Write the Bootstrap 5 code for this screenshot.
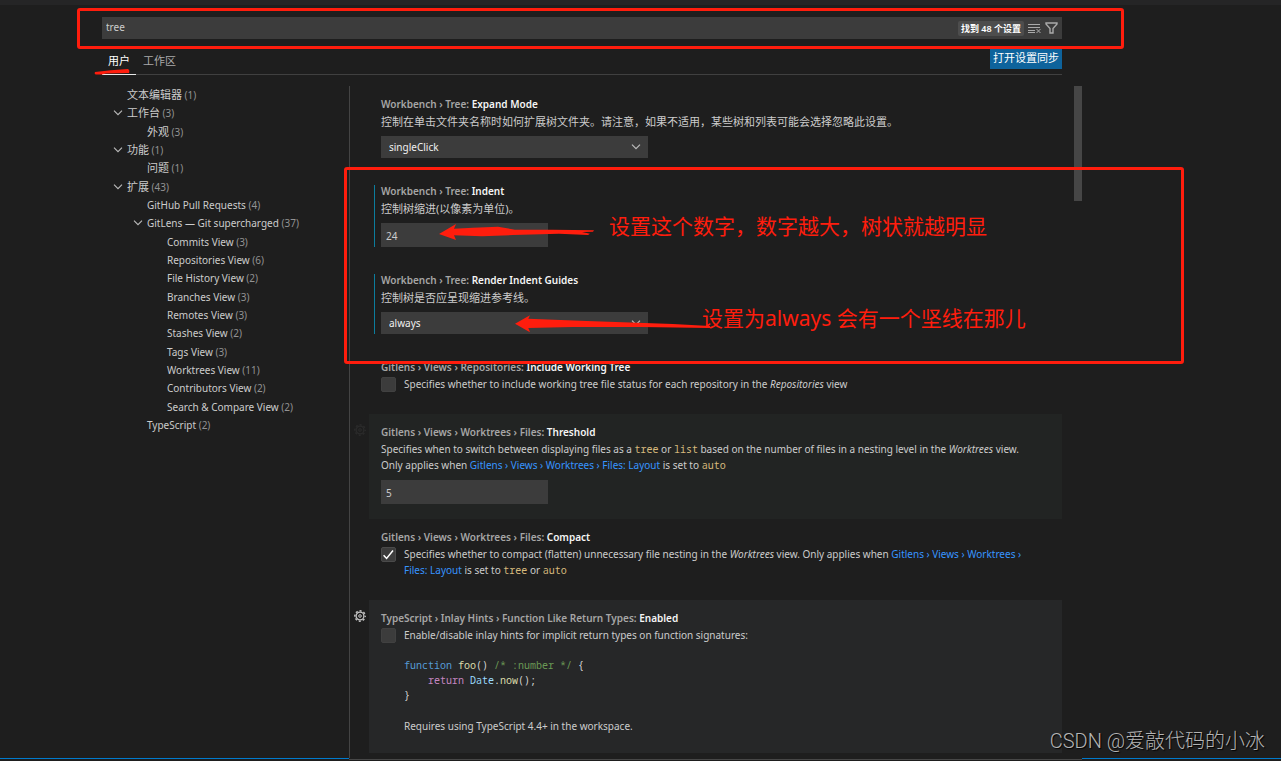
<!DOCTYPE html>
<html lang="zh-CN">
<head>
<meta charset="utf-8">
<meta name="viewport" content="width=device-width, initial-scale=1">
<title>设置</title>
<link href="https://cdn.jsdelivr.net/npm/bootstrap@5.3.0/dist/css/bootstrap.min.css" rel="stylesheet">
<style>
  :root { --ui: "Noto Sans", "Noto Sans CJK SC", sans-serif; --red: #ff1d0d; }
  body { background: #1e1e1e; color: #ccc; font: 10px/16px var(--ui); overflow: hidden; }
  .page { min-height: 100vh; }
  .top-strip { height: 5px; background: #252526; }
  .editor { padding: 12px 219px 0 102px; }
  .search { height: 22px; background: #3c3c3c; padding-right: 4px; }
  .search input { background: none; border: 0; color: #ccc; padding: 0 4px 2px; outline: 0; min-width: 0; }
  .count { background: #4d4d4d; color: #fff; border-radius: 2px; height: 15px; padding: 0 3px; font-size: 9px; line-height: 16px; font-weight: 600; font-family: "Noto Sans", "Noto Sans CJK SC", sans-serif; }
  .icon-btn { background: none; border: 0; padding: 0; line-height: 0; color: #aaa; }
  .tabs { height: 27px; margin-top: 9px; border-bottom: 1px solid #404040; }
  .tabs .nav-link { color: #aaa; font-size: 11px; line-height: 18px; padding: 4px 6px 4px; margin-bottom: -1px; border-bottom: 1px solid transparent; border-radius: 0; }
  .tabs .nav-link.active { color: #fff; border-bottom-color: #e7e7e7; }
  .tabs .nav-link + .nav-link { padding-left: 7px; }
  .sync { background: #0e639c; color: #fff; border: 0; height: 20px; padding: 0 3px 2px; font-size: 11px; line-height: 18px; margin-top: 1px; }
  .toc { width: 247px; padding-top: 11px; }
  .toc ul { height: 348px; }
  .toc li { padding-left: 25px; }
  .toc .lv2 { padding-left: 45px; }
  .toc .lv3 { padding-left: 65px; }
  .toc a { color: #ccc; text-decoration: none; }
  .toc small { color: #929292; font-size: 10px; }
  .toc svg { width: 10px; height: 6px; margin-left: -14px; margin-right: 4px; vertical-align: 1px; }
  .zh { font-size: 11px; }
  .settings { margin-top: 11px; border-left: 1px solid #444; padding-left: 19px; }
  .setting { padding: 10px 12px 15px; position: relative; }
  .setting h2 { font: 600 10px/16px var(--ui); color: #a6a6a6; margin: 0 0 1px; }
  .setting h2 b { color: #f5f5f5; font-weight: 600; }
  .setting p { margin: 0 0 7px; }
  .setting p.zh { line-height: 17px; margin-bottom: 6px; }
  .setting a { color: #3794ff; text-decoration: none; }
  .setting code { color: #d7ba7d; font: 10px/15px "Noto Sans Mono", monospace; }
  .setting pre { color: #d4d4d4; font: 10px/15px "Noto Sans Mono", monospace; margin: 15px 0; overflow: visible; }
  .kw { color: #569cd6; } .fn { color: #dcdcaa; } .cm { color: #6a9955; } .ret { color: #c586c0; } .obj { color: #9cdcfe; }
  .form-select { width: 267px; height: 22px; background-color: #3c3c3c; color: #f0f0f0; border: 0; border-radius: 0; font-size: 10px; line-height: 15px; padding: 4px 8px 3px; background-size: 10px 6px; background-position: right 7px center; background-image: url("data:image/svg+xml,%3Csvg xmlns='http://www.w3.org/2000/svg' viewBox='0 0 10 6'%3E%3Cpath d='M1 .7l4 4 4-4' fill='none' stroke='%23bbb' stroke-width='1.2'/%3E%3C/svg%3E"); }
  .num { width: 167px; height: 24px; background: #3c3c3c; color: #ccc; border: 0; border-radius: 0; padding: 1px 5px 0; font-size: 10px; }
  .edited::before { content: ""; position: absolute; left: 5px; top: 12px; bottom: 15px; width: 1px; background: #0c7d9d; }
  .form-check-input { width: 15px; height: 15px; margin: 1px 8px 0 0; background-color: #3c3c3c; border: 1px solid #414141; border-radius: 2px !important; flex: none; }
  .form-check-input:checked { background-color: #3c3c3c; border-color: #4a4a4a; background-size: 15px 15px; background-image: url("data:image/svg+xml,%3Csvg xmlns='http://www.w3.org/2000/svg' viewBox='0 0 15 15'%3E%3Cpath d='M2.6 8.2l3 3.2L12 3.6' fill='none' stroke='%23fff' stroke-width='1.5'/%3E%3C/svg%3E"); }
  .hovered { background: #222423; }
  .focused { background: #262728; }
  .gear { position: absolute; left: -15px; top: 10px; }
  .gear.dim { color: #2b2b2b; }
  .gear.lit { color: #c5c5c5; }
  .thumb { position: absolute; right: 199px; top: 86px; width: 8px; height: 115px; background: #464646; }
  .status { height: 3px; }
  .status .blue { border-top: 1px solid #007acc; }
  .status .grey { border-top: 1px solid #474747; margin-top: 1px; }
  .notes { position: absolute; inset: 0; pointer-events: none; color: var(--red); }
  .frame { position: absolute; border: 3px solid var(--red); border-radius: 3px; }
  .stroke { position: absolute; fill: var(--red); }
  .remark { position: absolute; margin: 0; font: 400 21px/30px "Noto Sans", "Noto Sans CJK SC", sans-serif; white-space: nowrap; }
  .watermark { position: absolute; right: 16px; bottom: 6px; color: #b4b4b4; font: 300 20px/28px Roboto, "Noto Sans CJK SC", sans-serif; text-shadow: 1px 1px 1px #000; }
</style>
<script src="https://cdn.jsdelivr.net/npm/bootstrap@5.3.0/dist/js/bootstrap.bundle.min.js"></script>
</head>
<body>
<svg width="0" height="0" class="position-absolute" aria-hidden="true">
  <symbol id="chev" viewBox="0 0 10 6"><path d="M1 .7l4 4 4-4" fill="none" stroke="#bbb" stroke-width="1.1"/></symbol>
  <symbol id="cog" viewBox="0 0 12 12"><g fill="none" stroke="currentColor"><circle cx="6" cy="6" r="3.9" stroke-width="1.3"/><circle cx="6" cy="6" r="1.3"/><circle cx="6" cy="6" r="5.2" stroke-width="1.4" stroke-dasharray="2.1 1.984" stroke-dashoffset="1.05"/></g></symbol>
</svg>
<div class="page d-flex flex-column position-relative">
  <div class="top-strip"></div>
  <main class="editor flex-grow-1 d-flex flex-column">
    <div class="search d-flex align-items-center">
      <input class="flex-grow-1" type="text" value="tree" aria-label="搜索设置">
      <span class="count text-nowrap">找到 48 个设置</span>
      <button class="icon-btn ms-1" type="button" aria-label="清除搜索"><svg width="13" height="11" viewBox="0 0 13 11" fill="none" stroke="currentColor"><path d="M0 1.5h12M0 4.500h12M0 7.500h7M0 9.500h7M8.500 6l4 4M12.500 6l-4 4"/></svg></button>
      <button class="icon-btn ms-1" type="button" aria-label="筛选"><svg width="13" height="12" viewBox="0 0 13 12" fill="none" stroke="currentColor" stroke-width="1.4"><path d="M1 1h11v1L8 6.500V11H5V6.500L1 2z"/></svg></button>
    </div>
    <div class="tabs d-flex justify-content-between">
      <nav class="nav"><a class="nav-link active" href="#">用户</a><a class="nav-link" href="#">工作区</a></nav>
      <button class="sync text-nowrap" type="button">打开设置同步</button>
    </div>
    <div class="d-flex flex-grow-1">
      <nav class="toc flex-shrink-0" aria-label="设置目录">
        <ul class="list-unstyled d-grid m-0 align-items-center text-nowrap">
          <li><a href="#"><span class="zh">文本编辑器</span> <small>(1)</small></a></li>
          <li><a href="#"><svg><use href="#chev"/></svg><span class="zh">工作台</span> <small>(3)</small></a></li>
          <li class="lv2"><a href="#"><span class="zh">外观</span> <small>(3)</small></a></li>
          <li><a href="#"><svg><use href="#chev"/></svg><span class="zh">功能</span> <small>(1)</small></a></li>
          <li class="lv2"><a href="#"><span class="zh">问题</span> <small>(1)</small></a></li>
          <li><a href="#"><svg><use href="#chev"/></svg><span class="zh">扩展</span> <small>(43)</small></a></li>
          <li class="lv2"><a href="#">GitHub Pull Requests <small>(4)</small></a></li>
          <li class="lv2"><a href="#"><svg><use href="#chev"/></svg>GitLens — Git supercharged <small>(37)</small></a></li>
          <li class="lv3"><a href="#">Commits View <small>(3)</small></a></li>
          <li class="lv3"><a href="#">Repositories View <small>(6)</small></a></li>
          <li class="lv3"><a href="#">File History View <small>(2)</small></a></li>
          <li class="lv3"><a href="#">Branches View <small>(3)</small></a></li>
          <li class="lv3"><a href="#">Remotes View <small>(3)</small></a></li>
          <li class="lv3"><a href="#">Stashes View <small>(2)</small></a></li>
          <li class="lv3"><a href="#">Tags View <small>(3)</small></a></li>
          <li class="lv3"><a href="#">Worktrees View <small>(11)</small></a></li>
          <li class="lv3"><a href="#">Contributors View <small>(2)</small></a></li>
          <li class="lv3"><a href="#">Search &amp; Compare View <small>(2)</small></a></li>
          <li class="lv2"><a href="#">TypeScript <small>(2)</small></a></li>
        </ul>
      </nav>
      <div class="settings flex-grow-1">
        <section class="setting">
          <h2>Workbench › Tree: <b>Expand Mode</b></h2>
          <p class="zh">控制在单击文件夹名称时如何扩展树文件夹。请注意，如果不适用，某些树和列表可能会选择忽略此设置。</p>
          <select class="form-select" aria-label="Expand Mode"><option>singleClick</option><option>doubleClick</option></select>
        </section>
        <section class="setting edited">
          <h2>Workbench › Tree: <b>Indent</b></h2>
          <p class="zh">控制树缩进(以像素为单位)。</p>
          <input class="num d-block" type="text" value="24" aria-label="Indent">
        </section>
        <section class="setting edited">
          <h2>Workbench › Tree: <b>Render Indent Guides</b></h2>
          <p class="zh">控制树是否应呈现缩进参考线。</p>
          <select class="form-select" aria-label="Render Indent Guides"><option>always</option><option>none</option></select>
        </section>
        <section class="setting">
          <h2>Gitlens › Views › Repositories: <b>Include Working Tree</b></h2>
          <div class="d-flex"><input class="form-check-input" type="checkbox" id="c1"><p><label for="c1">Specifies whether to include working tree file status for each repository in the <em>Repositories</em> view</label></p></div>
        </section>
        <section class="setting hovered">
          <button class="icon-btn gear dim" type="button" aria-label="更多操作"><svg width="12" height="12"><use href="#cog"/></svg></button>
          <h2>Gitlens › Views › Worktrees › Files: <b>Threshold</b></h2>
          <p>Specifies when to switch between displaying files as a <code>tree</code> or <code>list</code> based on the number of files in a nesting level in the <em>Worktrees</em> view.<br>Only applies when <a href="#">Gitlens › Views › Worktrees › Files: Layout</a> is set to <code>auto</code></p>
          <input class="num d-block" type="text" value="5" aria-label="Threshold">
        </section>
        <section class="setting">
          <h2>Gitlens › Views › Worktrees › Files: <b>Compact</b></h2>
          <div class="d-flex"><input class="form-check-input" type="checkbox" id="c2" checked><p><label for="c2">Specifies whether to compact (flatten) unnecessary file nesting in the <em>Worktrees</em> view. Only applies when <a href="#">Gitlens › Views › Worktrees ›<br>Files: Layout</a> is set to <code>tree</code> or <code>auto</code></label></p></div>
        </section>
        <section class="setting focused">
          <button class="icon-btn gear lit" type="button" aria-label="更多操作"><svg width="12" height="12"><use href="#cog"/></svg></button>
          <h2>TypeScript › Inlay Hints › Function Like Return Types: <b>Enabled</b></h2>
          <div class="d-flex"><input class="form-check-input" type="checkbox" id="c3">
            <div><label for="c3">Enable/disable inlay hints for implicit return types on function signatures:</label>
            <pre><span class="d-block"><span class="kw">function</span> <span class="fn">foo</span>() <span class="cm">/* :number */</span> {</span><span class="d-block">    <span class="ret">return</span> <span class="obj">Date</span>.<span class="fn">now</span>();</span><span class="d-block">}</span></pre>
            <p class="mb-1">Requires using TypeScript 4.4+ in the workspace.</p></div></div>
        </section>
      </div>
    </div>
  </main>
  <div class="thumb"></div>
  <div class="status d-flex"><div class="blue" style="width:349px"></div><div class="grey flex-grow-1"></div><div class="blue" style="width:199px"></div></div>
  <div class="notes">
    <div class="frame" style="left:77px;right:157px;top:8px;height:41px"></div>
    <div class="frame" style="left:344px;right:97px;top:167px;height:197px"></div>
    <svg class="stroke" style="left:94px;top:68px" width="38" height="8"><path d="M1 4Q16 2 34 1q2 1 1 4L12 5.500 8 6.500H2Q0 6 1 4z"/></svg>
    <svg class="stroke" style="left:438px;top:222px" width="158" height="20"><path d="M1 12L18 2l-2 4.700 19-1 25-1 17 3h38l41 .600-1 1.400-11 .300 8 1.700-2 1.300-29-1.300-46 1.300-31 1.300-28-1 2 4.700z"/></svg>
    <svg class="stroke" style="left:514px;top:314px" width="198" height="20"><path d="M1 9.700L16 1.300l-1.700 3.400L66 6.700l93 3.300 37 2v2l-70-1H59l-44.700 1 1.700 4.300z"/></svg>
    <p class="remark" style="left:609px;top:211px">设置这个数字，数字越大，树状就越明显</p>
    <p class="remark" style="left:702px;top:303px">设置为always 会有一个坚线在那儿</p>
    <div class="watermark">CSDN @爱敲代码的小冰</div>
  </div>
</div>
</body>
</html>
